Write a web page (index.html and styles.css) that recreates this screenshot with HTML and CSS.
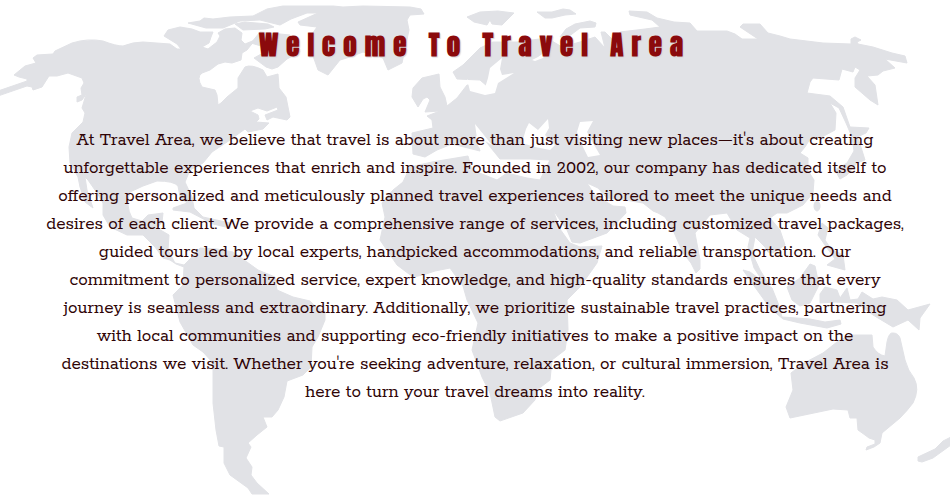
FILE: index.html
```html
<!DOCTYPE html>
<html lang="en">
<head>
  <meta charset="utf-8">
  <meta name="viewport" content="width=device-width, initial-scale=1">
  <title>Travel Area</title>
  <link rel="stylesheet" href="styles.css">
</head>
<body>
  <main class="welcome">
    <svg class="map" viewBox="0 0 950 500" aria-hidden="true">
      <g class="land">
        <!-- North and South America -->
        <path d="M-2 91L27 81L27 79L19 77L14 75L25 66L36 63L33 58L37 55L53 54L55 51L72 43Q88 38 103 41Q116 46 123 46Q133 42 143 42L170 44L177 49L181 49L177 44L164 36L168 30L180 27L192 29L200 32L213 32L211 37L209 43L202 47L208 49L217 42L220 36L218 33L225 29L235 28L242 33L241 40L245 44L255 40L247 50L242 53L241 60L232 63L225 62L218 64L210 70L202 73Q196 77 202 87L215 90L217 95L218 105L221 103L227 97L238 88L238 78L245 67Q251 64 263 70L267 77L278 74L279 88L286 97L290 117L287 120L273 117L267 120L265 115L278 110L277 107L267 111L258 108L250 111L258 115L259 119L256 122L269 123L263 129L248 132L245 129L230 140L212 152L203 163L190 170L185 182L192 197L194 208L203 217L230 223L230 228L213 224L190 212L173 210L173 208L187 203L180 197L178 186Q174 181 157 181L143 186L130 192Q125 205 132 218L142 221L148 215L163 213L162 222L157 228L169 235L168 250L175 263L184 265L192 257L200 248L217 249L233 252L247 262L258 270L275 277L277 290L293 297L310 301L316 307L325 312L325 320L318 337L312 347L311 367L303 375L287 381L284 397L278 410L272 417L263 417L267 427L257 435L248 443L251 447L246 458L252 467L251 475L257 483L269 494L252 494L248 488L230 475L224 463L224 447L219 446L216 430L213 403L213 363L203 352L193 345L180 322L173 295L183 285L184 267L176 264L170 260L163 258L155 247L143 235L127 235L110 227L103 215L103 203L97 193L88 180L85 177L87 190L93 208L85 202L80 187L78 177L70 163L69 147L72 133L83 122L85 113L82 108L85 98L87 93L82 100L77 102L77 97L82 95L81 88L84 83L82 78L68 73L57 76L49 76L42 87L33 90L32 87L27 86L-2 96Z"/>
        <!-- Arctic islands and Greenland -->
        <path d="M188 23L200 21L204 18L213 19L230 17L253 16L267 9L283 6L333 6L343 7L363 6L410 7L421 9L424 14L410 15L407 20L409 30L402 63L388 70L383 58L363 52L350 57L340 60L328 75L318 70L312 53L310 37L317 27L300 25L298 22L318 13L307 13L291 19L280 25L260 20L240 21L223 28L206 28Z"/>
        <path d="M235 24L245 22L268 24L274 27L265 29L243 30ZM260 32L290 35L300 52L287 59L278 67L272 69L266 67L254 58L263 53L261 46L251 43Z"/>
        <!-- Svalbard, Franz Josef Land, Novaya Zemlya -->
        <path d="M467 17L480 12L498 11L514 13L502 25L492 24L490 20L487 25L474 22ZM537 12L552 12L563 9L570 10L576 14L565 15L552 18L545 18ZM560 37L566 29L575 24L590 21L596 23L595 27L580 28L568 37Z"/>
        <!-- Europe and Asia -->
        <path d="M422 78L439 74L440 87L445 97L447 106L457 98L467 85L470 85L475 91L485 95L495 93L480 80L457 79L453 72L463 65L473 55L480 48L493 42L517 42L547 38L562 47L580 42L595 37L605 48L601 32L605 32L613 40L620 32L645 29L660 27L652 20L630 15L629 11L647 12L657 18L674 22L690 23L697 31L727 31L735 34L742 39L758 39L740 27L743 24L760 24L768 33L780 36L790 39L823 43L851 44L851 39L855 37L861 40L857 42L858 44L873 47L892 53L905 56L907 63L885 59L895 68L883 71L878 75L867 76L875 85L878 105L870 100L855 87L855 78L860 70L855 67L853 72L842 69L839 80L813 78L810 82L807 93L830 96L843 107L850 127L869 128L866 133L857 137L860 144L865 160L857 163L847 175L840 179L835 170L847 163L854 151L852 137L846 123L839 108L830 103L836 113L835 130L822 137L810 139L805 147L800 153L808 158L808 168L803 163L814 180L813 193L803 205L787 213L777 213L770 218L780 230L785 245L773 253L768 252L765 247L755 237L752 253L760 270L768 283L764 283L754 268L748 247L750 238L737 230L727 213L710 215L695 233L700 260L700 269L696 273L691 263L683 253L673 230L665 217L658 213L653 211L643 203L625 200L607 198L598 188L587 183L595 195L613 206L625 207L626 213L607 233L580 243L572 242L567 230L553 210L545 195L540 180L550 160L530 159L500 159L490 148L475 134L480 151L468 148L452 144L437 150L425 157L413 154L412 133L433 128L432 120L427 116L440 111L425 112L430 100L427 97L423 99L418 107L412 97L413 88Z"/>
        <!-- Africa -->
        <path d="M403 182L410 167L432 162L468 156L472 170L497 180L507 173L527 178L540 180L545 195L553 210L560 229L570 243L580 247L602 246L597 263L580 287L567 300L568 330L565 350L552 360L550 380L537 390L535 400L523 413L500 421L495 417L490 393L482 377L472 350L478 323L467 300L463 286L450 268L435 271L423 275L413 277L397 265L380 240L385 217L382 203L393 190Z"/>
        <!-- Indonesia and the Philippines -->
        <path d="M743 270L750 272L772 288L778 303L782 317L810 319L825 322L840 320L841 324L827 328L800 323L783 319L770 308L757 290ZM787 287L800 278L810 264L815 266L819 285L810 303L800 306L792 300ZM820 303L820 294L825 287L837 290L840 298L847 288L850 300L858 299L862 292L873 299L882 297L897 300L908 310L930 304L920 318L919 330L908 320L893 327L873 315L857 303L835 302ZM822 223L828 228L825 240L831 249L843 255L845 270L827 265L835 259L827 248L818 235Z"/>
        <ellipse cx="817" cy="206" rx="3" ry="5"/>
        <!-- Australia and New Zealand -->
        <path d="M872 335L873 347Q878 355 885 356L887 342Q889 332 893 333Q898 333 900 338L905 360Q908 371 914 378Q920 389 913 403Q907 411 900 418L882 433L880 443L874 447L866 450L867 447L875 444L875 440L869 438L865 435L858 430L857 418L850 418L848 410L833 409L790 418L786 407L793 390L791 373L804 363L823 353L837 342L850 335ZM951 437L943 441L935 449L918 457L918 461L922 462L933 458L951 445Z"/>
      </g>
      <g class="sea">
        <!-- Baltic, White, Mediterranean, Black and Caspian seas -->
        <path d="M502 58L490 68L488 78L485 88L475 87L467 79L470 91L485 95L495 93L498 83L514 73L502 75L500 69ZM548 50L538 57L532 60L535 61L543 58ZM580 122L593 121L587 132L593 143L600 155L588 157L583 147L577 132ZM522 143L526 129L529 123L538 130L548 119L549 128L545 135L555 145L550 150L535 147ZM475 124L492 145L485 141L500 160L494 162L478 146Z"/>
      </g>
    </svg>
    <h1 class="title">Welcome To Travel Area</h1>
    <p class="intro">At Travel Area, we believe that travel is about more than just visiting new places—it's about creating<br>
      unforgettable experiences that enrich and inspire. Founded in 2002, our company has dedicated itself to<br>
      offering personalized and meticulously planned travel experiences tailored to meet the unique needs and<br>
      desires of each client. We provide a comprehensive range of services, including customized travel packages,<br>
      guided tours led by local experts, handpicked accommodations, and reliable transportation. Our<br>
      commitment to personalized service, expert knowledge, and high-quality standards ensures that every<br>
      journey is seamless and extraordinary. Additionally, we prioritize sustainable travel practices, partnering<br>
      with local communities and supporting eco-friendly initiatives to make a positive impact on the<br>
      destinations we visit. Whether you're seeking adventure, relaxation, or cultural immersion, Travel Area is<br>
      here to turn your travel dreams into reality.</p>
  </main>
</body>
</html>
```
FILE: styles.css
```css
* {
  box-sizing: border-box;
}

body {
  margin: 0;
  background: #fff;
}

.welcome {
  position: relative;
  min-height: 100vh;
  padding: 24px 32px;
  overflow: hidden;
  text-align: center;
}

.map {
  position: absolute;
  inset: 0;
  z-index: -1;
  width: 100%;
  height: 100%;
}

.land {
  fill: #e1e2e6;
  stroke: #e1e2e6;
  stroke-linejoin: round;
}

.sea {
  fill: #fff;
}

.title {
  margin: 0;
  color: #8b0a0c;
  font: bold 27px/42px Anton, Impact, sans-serif;
  letter-spacing: 8px;
  text-shadow: 1px 1px 1px #d8d4d8;
}

.intro {
  margin: 60px 0 0;
  color: #2f0406;
  font: 19px/28px Rokkitt, "DejaVu Serif Condensed", serif;
}
```
